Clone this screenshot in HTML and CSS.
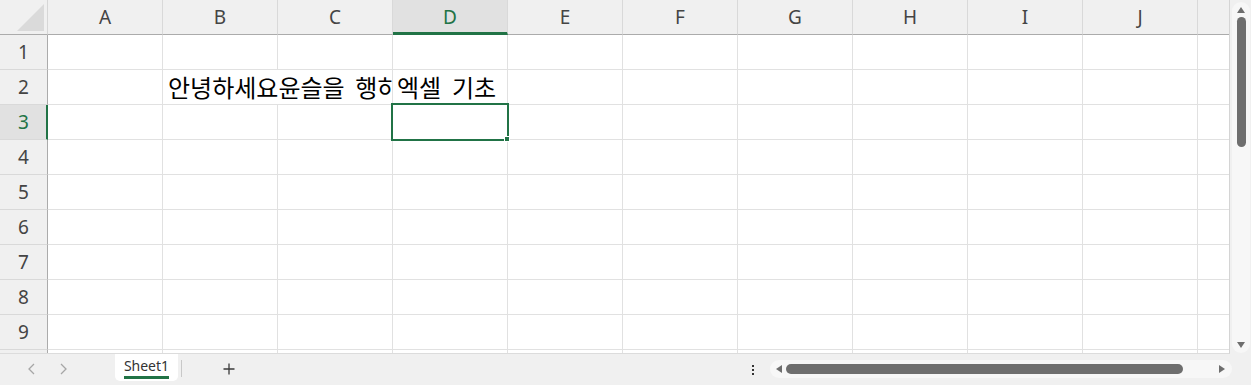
FILE: index.html
```html
<!DOCTYPE html>
<html lang="ko">
<head>
<meta charset="utf-8">
<title>Sheet1</title>
<link rel="stylesheet" href="styles.css">
</head>
<body>
<div class="app">
  <div class="main">
    <div class="sheet">
      <div class="grid">
        <div class="corner"><svg class="corner-tri" width="28" height="28" viewBox="0 0 28 28"><polygon points="27,0 27,27 0,27" fill="#dadada"/></svg></div>
        <div class="ch">A</div><div class="ch">B</div><div class="ch">C</div><div class="ch sel">D</div><div class="ch">E</div><div class="ch">F</div><div class="ch">G</div><div class="ch">H</div><div class="ch">I</div><div class="ch">J</div><div class="ch">K</div>

        <div class="rh">1</div><div class="c"></div><div class="c"></div><div class="c"></div><div class="c"></div><div class="c"></div><div class="c"></div><div class="c"></div><div class="c"></div><div class="c"></div><div class="c"></div><div class="c"></div>

        <div class="rh">2</div><div class="c"></div><div class="c txt span2">안녕하세요윤슬을 행하세요</div><div class="c txt">엑셀 기초</div><div class="c"></div><div class="c"></div><div class="c"></div><div class="c"></div><div class="c"></div><div class="c"></div><div class="c"></div>

        <div class="rh sel">3</div><div class="c"></div><div class="c"></div><div class="c"></div><div class="c active"><div class="selbox"><div class="handle"></div></div></div><div class="c"></div><div class="c"></div><div class="c"></div><div class="c"></div><div class="c"></div><div class="c"></div><div class="c"></div>

        <div class="rh">4</div><div class="c"></div><div class="c"></div><div class="c"></div><div class="c"></div><div class="c"></div><div class="c"></div><div class="c"></div><div class="c"></div><div class="c"></div><div class="c"></div><div class="c"></div>

        <div class="rh">5</div><div class="c"></div><div class="c"></div><div class="c"></div><div class="c"></div><div class="c"></div><div class="c"></div><div class="c"></div><div class="c"></div><div class="c"></div><div class="c"></div><div class="c"></div>

        <div class="rh">6</div><div class="c"></div><div class="c"></div><div class="c"></div><div class="c"></div><div class="c"></div><div class="c"></div><div class="c"></div><div class="c"></div><div class="c"></div><div class="c"></div><div class="c"></div>

        <div class="rh">7</div><div class="c"></div><div class="c"></div><div class="c"></div><div class="c"></div><div class="c"></div><div class="c"></div><div class="c"></div><div class="c"></div><div class="c"></div><div class="c"></div><div class="c"></div>

        <div class="rh">8</div><div class="c"></div><div class="c"></div><div class="c"></div><div class="c"></div><div class="c"></div><div class="c"></div><div class="c"></div><div class="c"></div><div class="c"></div><div class="c"></div><div class="c"></div>

        <div class="rh">9</div><div class="c"></div><div class="c"></div><div class="c"></div><div class="c"></div><div class="c"></div><div class="c"></div><div class="c"></div><div class="c"></div><div class="c"></div><div class="c"></div><div class="c"></div>

        <div class="rh">10</div><div class="c"></div><div class="c"></div><div class="c"></div><div class="c"></div><div class="c"></div><div class="c"></div><div class="c"></div><div class="c"></div><div class="c"></div><div class="c"></div><div class="c"></div>
      </div>
    </div>
    <div class="vscroll">
      <div class="vtrack">
        <svg class="varrow" width="10" height="8" viewBox="0 0 10 8"><polygon points="5,1 9,7 1,7" fill="#6e6e6e"/></svg>
        <div class="vthumb"></div>
        <div class="vspacer"></div>
        <svg class="varrow" width="10" height="8" viewBox="0 0 10 8"><polygon points="1,1 9,1 5,7" fill="#6e6e6e"/></svg>
      </div>
    </div>
  </div>
  <div class="bottombar">
    <div class="nav">
      <svg width="10" height="14" viewBox="0 0 10 14"><polyline points="7,2 2,7 7,12" fill="none" stroke="#a6a6a6" stroke-width="1.3"/></svg>
      <svg width="10" height="14" viewBox="0 0 10 14"><polyline points="3,2 8,7 3,12" fill="none" stroke="#a6a6a6" stroke-width="1.3"/></svg>
    </div>
    <div class="tab"><span class="tab-label">Sheet1</span></div>
    <div class="tabsep"></div>
    <div class="addsheet"><svg width="14" height="14" viewBox="0 0 14 14"><path d="M7 1.5V12.5M1.5 7H12.5" stroke="#3a3a3a" stroke-width="1.3" fill="none"/></svg></div>
    <div class="fill"></div>
    <div class="more"><svg width="4" height="12" viewBox="0 0 4 12"><rect x="1" y="1" width="2" height="2" fill="#333"/><rect x="1" y="5" width="2" height="2" fill="#333"/><rect x="1" y="9" width="2" height="2" fill="#333"/></svg></div>
    <div class="htrack">
      <svg class="harrow" width="8" height="10" viewBox="0 0 8 10"><polygon points="1,5 7,1 7,9" fill="#6e6e6e"/></svg>
      <div class="hthumb"></div>
      <div class="hspacer"></div>
      <svg class="harrow" width="8" height="10" viewBox="0 0 8 10"><polygon points="1,1 7,5 1,9" fill="#6e6e6e"/></svg>
    </div>
  </div>
</div>
</body>
</html>
```

FILE: styles.css
```css
* { box-sizing: border-box; }
html, body { margin: 0; padding: 0; }
body {
  width: 1251px;
  height: 385px;
  overflow: hidden;
  background: #ffffff;
  font-family: "Noto Sans", "Liberation Sans", sans-serif;
}
.app { display: flex; flex-direction: column; width: 1251px; height: 385px; }
.main { display: flex; height: 354px; }
.sheet {
  width: 1230px;
  height: 354px;
  overflow: hidden;
  border-right: 1px solid #d4d4d4;
  border-bottom: 1px solid #dcdcdc;
}
.grid {
  display: grid;
  grid-template-columns: 48px repeat(11, 115px);
  grid-template-rows: repeat(11, 35px);
}
.corner {
  background: #f0f0f0;
  border-right: 1px solid #d6d6d6;
  border-bottom: 1px solid #ababab;
  display: flex;
  justify-content: flex-end;
  align-items: flex-end;
  padding: 0 2px 2px 0;
}
.corner-tri { display: block; }
.ch {
  background: #f0f0f0;
  border-right: 1px solid #d9d9d9;
  border-bottom: 1px solid #ababab;
  display: flex;
  align-items: center;
  justify-content: center;
  font-size: 19px;
  color: #444444;
  padding-bottom: 1px;
}
.ch.sel {
  background: #e1e1e1;
  color: #217346;
  border-bottom: 3px solid #217346;
  padding-top: 2px;
}
.rh {
  background: #f0f0f0;
  border-right: 1px solid #ababab;
  border-bottom: 1px solid #d9d9d9;
  display: flex;
  align-items: center;
  justify-content: center;
  font-size: 19px;
  color: #444444;
}
.rh.sel {
  background: #e1e1e1;
  color: #217346;
  border-right: 2px solid #217346;
  padding-left: 1px;
}
.c {
  border-right: 1px solid #e1e1e1;
  border-bottom: 1px solid #e1e1e1;
  background: #ffffff;
}
.txt {
  font-family: "Noto Sans CJK KR", "Noto Sans", sans-serif;
  font-size: 24px;
  color: #000000;
  white-space: nowrap;
  overflow: hidden;
  display: flex;
  align-items: center;
  padding-left: 4px;
  padding-bottom: 1px;
  line-height: 1;
  word-spacing: 4px;
}
.span2 { grid-column: span 2; padding-left: 5px; }
.active { position: relative; }
.selbox {
  position: absolute;
  left: -2px;
  top: -2px;
  right: -2px;
  bottom: -2px;
  border: 2px solid #217346;
}
.handle {
  position: absolute;
  right: -3px;
  bottom: -3px;
  width: 6px;
  height: 6px;
  background: #217346;
  border: 1px solid #ffffff;
}
.vscroll {
  width: 21px;
  background: #f0f0f0;
  padding: 2px 1px 0 2px;
}
.vtrack {
  height: 351px;
  background: #f7f7f7;
  border-radius: 9px;
  display: flex;
  flex-direction: column;
  align-items: center;
  padding: 4px 0 4px 0;
}
.varrow { display: block; flex: none; }
.vthumb {
  margin-top: 3px;
  width: 9px;
  height: 130px;
  background: #6e6e6e;
  border-radius: 5px;
  flex: none;
}
.vspacer { flex: 1; }
.bottombar {
  height: 31px;
  background: #f0f0f0;
  display: flex;
  align-items: flex-start;
}
.nav {
  display: flex;
  gap: 21px;
  padding: 8px 0 0 27px;
  width: 115px;
}
.nav svg { display: block; }
.tab {
  width: 63px;
  height: 27px;
  background: #ffffff;
  border-radius: 0 0 5px 5px;
  display: flex;
  justify-content: center;
  padding-top: 3px;
}
.tab-label {
  font-size: 14px;
  color: #333333;
  height: 22px;
  border-bottom: 3px solid #217346;
  line-height: 18px;
}
.tabsep {
  width: 1px;
  height: 17px;
  background: #c8c8c8;
  margin: 6px 0 0 3px;
}
.addsheet { padding: 8px 0 0 40px; }
.addsheet svg { display: block; }
.fill { flex: 1; }
.more { padding: 10px 0 0 0; margin-right: 15px; }
.more svg { display: block; }
.htrack {
  width: 462px;
  height: 18px;
  margin-top: 6px;
  margin-right: 19px;
  background: #f7f7f7;
  border-radius: 9px;
  display: flex;
  align-items: center;
  padding: 0 6px 0 5px;
}
.harrow { display: block; flex: none; }
.hthumb {
  margin-left: 3px;
  width: 397px;
  height: 10px;
  background: #6e6e6e;
  border-radius: 5px;
  flex: none;
}
.hspacer { flex: 1; }
```
